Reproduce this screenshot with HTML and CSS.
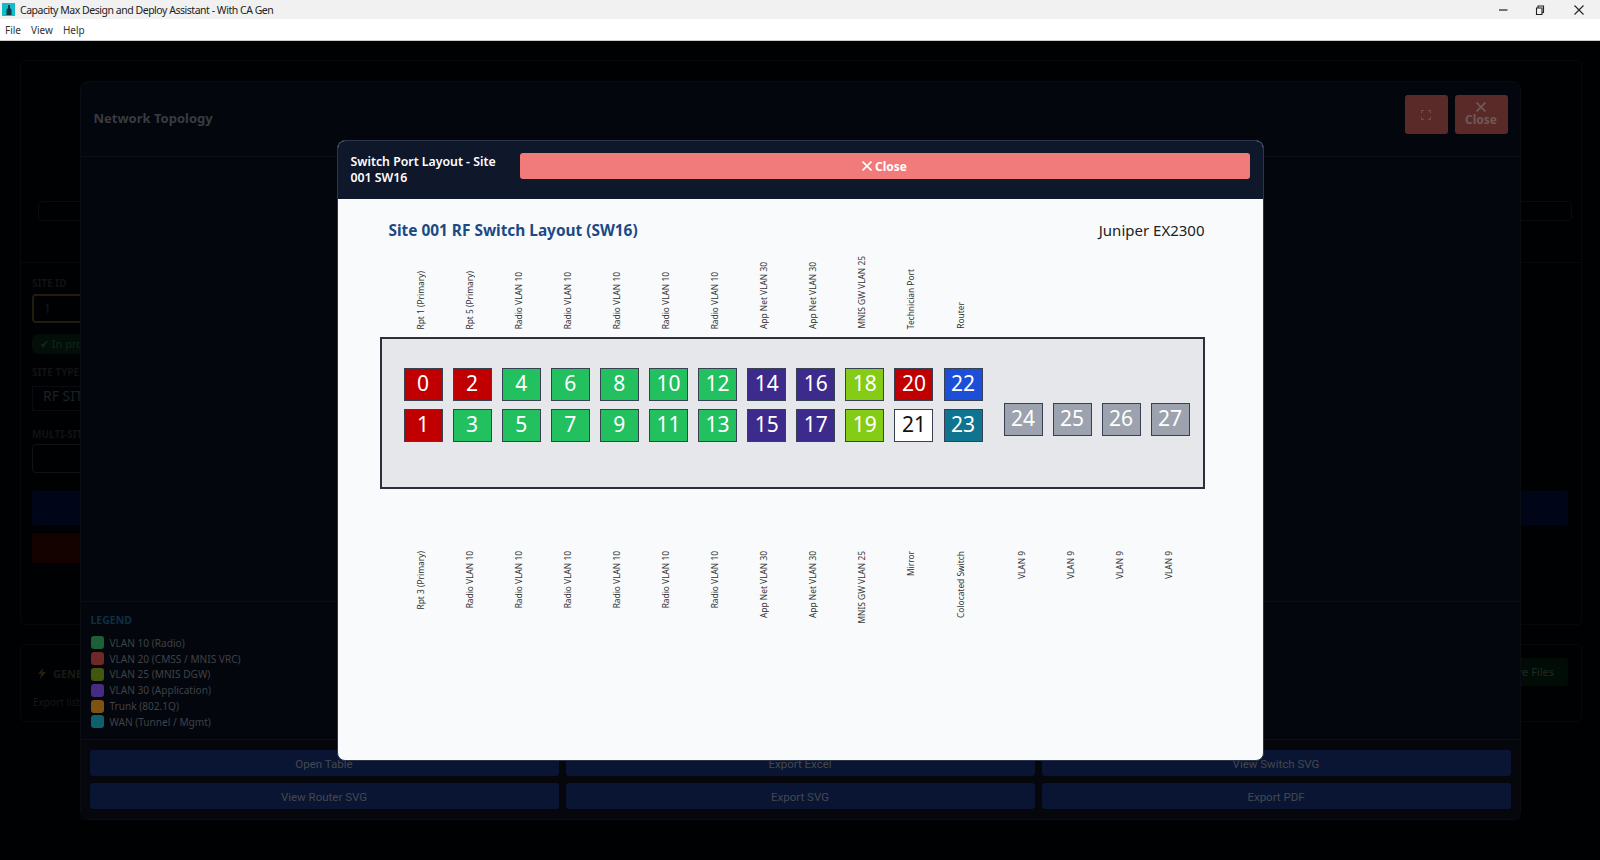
FILE: index.html
```html
<!DOCTYPE html>
<html lang="en">
<head>
    <meta charset="UTF-8">
    <meta name="viewport" content="width=device-width, initial-scale=1.0">
    <link rel="stylesheet" href="styles.css">
    <title>Capacity Max Design and Deploy Assistant - With CA Gen</title>
</head>
<body>
    <div class="titlebar">
        <svg class="app-icon" width="13" height="13" viewBox="0 0 13 13">
            <rect width="13" height="13" fill="#14bccb"/>
            <path d="M6 2h2v3l1.5 1.5V12h-5V6.500L6 5z" fill="#123a40"/>
        </svg>
        <span class="app-title">Capacity Max Design and Deploy Assistant - With CA Gen</span>
        <div class="win-buttons">
            <svg width="10" height="10" viewBox="0 0 10 10"><path d="M1 5h8.500" stroke="#222" stroke-width="1.200" fill="none"/></svg>
            <svg width="10" height="10" viewBox="0 0 10 10"><path d="M1.500 3h5.500v6.500h-5.500zM3 3V1h5.500v6.500H7" stroke="#222" stroke-width="1.100" fill="none"/></svg>
            <svg width="10" height="10" viewBox="0 0 10 10"><path d="M.5 .5l9 9M9.500 .5l-9 9" stroke="#222" stroke-width="1.100" fill="none"/></svg>
        </div>
    </div>
    <div class="menubar">
        <span>File</span>
        <span>View</span>
        <span>Help</span>
    </div>

    <div class="app">
        <div class="panel main-panel">
            <div class="strip"></div>
            <div class="form">
                <div class="form-label">SITE ID</div>
                <div class="input active">1</div>
                <div class="badge">✔ In pro</div>
                <div class="form-label type-label">SITE TYPE</div>
                <div class="select">RF SITE</div>
                <div class="form-label multi-label">MULTI-SITE</div>
                <div class="input multi-input"></div>
                <div class="bar blue-bar"></div>
                <div class="bar red-bar"></div>
            </div>
        </div>
        <div class="panel gen-panel">
            <div>
                <div class="gen-title">
                    <svg width="8" height="11" viewBox="0 0 8 11"><path d="M5 0L0 6h3l-1 5 6-7H4.500z" fill="#262008"/></svg>
                    GENE
                </div>
                <div class="gen-sub">Export list</div>
            </div>
            <div class="gen-button">Save Files</div>
        </div>

        <div class="overlay">
            <div class="topology">
                <div class="topology-header">
                    <div class="topology-title">Network Topology</div>
                    <div class="dim-button icon-button">
                        <svg width="10" height="10" viewBox="0 0 10 10"><path d="M.5 3V.5H3M7 .5h2.500V3M9.500 7v2.500H7M3 9.500H.5V7" stroke="#6b5452" fill="none"/></svg>
                    </div>
                    <div class="dim-button close-button">
                        <svg width="10" height="10" viewBox="0 0 10 10"><path d="M.5 .5l9 9M9.500 .5l-9 9" stroke="#6f5957" stroke-width="1.800" fill="none"/></svg>
                        Close
                    </div>
                </div>
                <div class="topology-body"></div>
                <div class="legend">
                    <div class="legend-title">LEGEND</div>
                    <div class="legend-item"><i class="sw-green"></i>VLAN 10 (Radio)</div>
                    <div class="legend-item"><i class="sw-red"></i>VLAN 20 (CMSS / MNIS VRC)</div>
                    <div class="legend-item"><i class="sw-olive"></i>VLAN 25 (MNIS DGW)</div>
                    <div class="legend-item"><i class="sw-purple"></i>VLAN 30 (Application)</div>
                    <div class="legend-item"><i class="sw-orange"></i>Trunk (802.1Q)</div>
                    <div class="legend-item"><i class="sw-teal"></i>WAN (Tunnel / Mgmt)</div>
                </div>
                <div class="topology-footer">
                    <button>Open Table</button>
                    <button>Export Excel</button>
                    <button>View Switch SVG</button>
                    <button>View Router SVG</button>
                    <button>Export SVG</button>
                    <button>Export PDF</button>
                </div>
            </div>
        </div>

        <div class="overlay">
            <div class="switch-modal">
                <div class="switch-header">
                    <div class="switch-title">Switch Port Layout - Site 001 SW16</div>
                    <button class="switch-close">
                        <svg width="10" height="10" viewBox="0 0 10 10"><path d="M.5 .5l9 9M9.500 .5l-9 9" stroke="#fff" stroke-width="1.600" fill="none"/></svg>
                        Close
                    </button>
                </div>
                <div class="switch-body">
                    <div class="switch-heading">
                        <h2>Site 001 RF Switch Layout (SW16)</h2>
                        <span>Juniper EX2300</span>
                    </div>

                    <div class="labels labels-top">
                        <div><span>Rpt 1 (Primary)</span></div>
                        <div><span>Rpt 5 (Primary)</span></div>
                        <div><span>Radio VLAN 10</span></div>
                        <div><span>Radio VLAN 10</span></div>
                        <div><span>Radio VLAN 10</span></div>
                        <div><span>Radio VLAN 10</span></div>
                        <div><span>Radio VLAN 10</span></div>
                        <div><span>App Net VLAN 30</span></div>
                        <div><span>App Net VLAN 30</span></div>
                        <div><span>MNIS GW VLAN 25</span></div>
                        <div><span>Technician Port</span></div>
                        <div><span>Router</span></div>
                    </div>

                    <div class="switch-panel">
                        <div class="port-bank">
                            <div class="port red">0</div>
                            <div class="port red">1</div>
                            <div class="port red">2</div>
                            <div class="port green">3</div>
                            <div class="port green">4</div>
                            <div class="port green">5</div>
                            <div class="port green">6</div>
                            <div class="port green">7</div>
                            <div class="port green">8</div>
                            <div class="port green">9</div>
                            <div class="port green">10</div>
                            <div class="port green">11</div>
                            <div class="port green">12</div>
                            <div class="port green">13</div>
                            <div class="port purple">14</div>
                            <div class="port purple">15</div>
                            <div class="port purple">16</div>
                            <div class="port purple">17</div>
                            <div class="port lime">18</div>
                            <div class="port lime">19</div>
                            <div class="port red">20</div>
                            <div class="port white">21</div>
                            <div class="port blue">22</div>
                            <div class="port teal">23</div>
                        </div>
                        <div class="port-bank uplinks">
                            <div class="port gray">24</div>
                            <div class="port gray">25</div>
                            <div class="port gray">26</div>
                            <div class="port gray">27</div>
                        </div>
                    </div>

                    <div class="labels labels-bottom">
                        <div><span>Rpt 3 (Primary)</span></div>
                        <div><span>Radio VLAN 10</span></div>
                        <div><span>Radio VLAN 10</span></div>
                        <div><span>Radio VLAN 10</span></div>
                        <div><span>Radio VLAN 10</span></div>
                        <div><span>Radio VLAN 10</span></div>
                        <div><span>Radio VLAN 10</span></div>
                        <div><span>App Net VLAN 30</span></div>
                        <div><span>App Net VLAN 30</span></div>
                        <div><span>MNIS GW VLAN 25</span></div>
                        <div><span>Mirror</span></div>
                        <div><span>Colocated Switch</span></div>
                        <div class="first-uplink"><span>VLAN 9</span></div>
                        <div class="uplink-label"><span>VLAN 9</span></div>
                        <div class="uplink-label"><span>VLAN 9</span></div>
                        <div class="uplink-label"><span>VLAN 9</span></div>
                    </div>
                </div>
            </div>
        </div>
    </div>
</body>
</html>
```

FILE: styles.css
```css
* {
    box-sizing: border-box;
}

body {
    font-family: 'Noto Sans', sans-serif;
    background-color: #000;
    height: 100vh;
    margin: 0;
    overflow: hidden;
    display: flex;
    flex-direction: column;
}

/* window chrome */
.titlebar {
    height: 19px;
    background-color: #f1f1f1;
    display: flex;
    align-items: center;
    padding-left: 2px;
    font-size: 10.500px;
    letter-spacing: -0.47px;
    color: #222;
}

.app-icon {
    margin-right: 5px;
}

.win-buttons {
    margin-left: auto;
    display: flex;
    gap: 29px;
    padding-right: 16px;
}

.win-buttons svg:first-child {
    margin-right: -2px;
}

.menubar {
    height: 22px;
    background-color: #fff;
    border-bottom: 1px solid #ccc;
    display: flex;
    align-items: center;
    gap: 10px;
    padding-left: 5px;
    font-size: 10px;
    color: #333;
}

.app {
    position: relative;
    flex: 1;
    padding: 19px 18px 0 20px;
    background-color: #000103;
}

/* dimmed page behind the dialogs */
.panel {
    border: 1px solid #07080b;
    border-radius: 4px;
}

.main-panel {
    height: 565px;
    padding-top: 140px;
}

.strip {
    height: 20px;
    margin: 0 9px 0 17px;
    border: 1px solid #0a0b0e;
    border-radius: 4px;
}

.form {
    margin-top: 41px;
    padding: 15px 13px 0 11px;
    border-top: 1px solid #07080b;
}

.form-label {
    height: 11px;
    line-height: 11px;
    font-size: 10px;
    font-weight: 700;
    color: #111215;
}

.input {
    width: 200px;
    height: 29px;
    margin-top: 5px;
    padding-left: 10px;
    border: 1px solid #101216;
    border-radius: 4px;
    font-size: 12px;
    line-height: 25px;
    color: #0a1c2c;
}

.input.active {
    border: 2px solid #221c10;
}

.badge {
    width: 200px;
    height: 20px;
    margin-top: 11px;
    padding-left: 8px;
    border-radius: 6px;
    background-color: #030e08;
    font-size: 11px;
    line-height: 20px;
    color: #0d2a17;
}

.type-label {
    margin-top: 13px;
}

.select {
    width: 200px;
    height: 25px;
    margin-top: 8px;
    padding-left: 10px;
    border: 1px solid #0a0b0e;
    font-size: 14px;
    line-height: 18px;
    color: #1e2024;
}

.multi-label {
    margin-top: 18px;
}

.multi-input {
    margin-top: 4px;
}

.bar {
    border-radius: 3px;
}

.blue-bar {
    height: 34px;
    margin-top: 18px;
    background-color: #010518;
}

.red-bar {
    width: 400px;
    height: 30px;
    margin-top: 8px;
    background-color: #130200;
}

.gen-panel {
    height: 78px;
    margin-top: 19px;
    padding: 13px 13px 0 12px;
    display: flex;
    justify-content: space-between;
    align-items: flex-start;
}

.gen-title {
    margin: 8px 0 0 5px;
    display: flex;
    align-items: center;
    gap: 7px;
    font-size: 11px;
    font-weight: 700;
    color: #1a1a14;
}

.gen-sub {
    margin-top: 14px;
    font-size: 10px;
    color: #14161a;
}

.gen-button {
    width: 200px;
    height: 28px;
    padding-right: 14px;
    background-color: #020c07;
    border-radius: 3px;
    text-align: right;
    font-size: 11px;
    line-height: 28px;
    color: #1d2a22;
}

/* dialogs */
.overlay {
    position: absolute;
    inset: 0;
    display: flex;
    align-items: center;
    justify-content: center;
}

.topology {
    width: 1441px;
    height: 739px;
    display: flex;
    flex-direction: column;
    background-color: #03060d;
    border: 1px solid #0a0c12;
    border-radius: 8px;
}

.topology-header {
    height: 75px;
    padding: 13px 12px 0 13px;
    display: flex;
    align-items: flex-start;
    gap: 7px;
    border-bottom: 1px solid #0c0e14;
}

.topology-title {
    margin-right: auto;
    margin-top: 14px;
    font-size: 13px;
    font-weight: 700;
    color: #393b40;
}

.dim-button {
    height: 39px;
    background-color: #592a28;
    border-radius: 3px;
    display: flex;
    flex-direction: column;
    align-items: center;
    justify-content: center;
}

.icon-button {
    width: 43px;
}

.close-button {
    width: 53px;
    gap: 1px;
    font-size: 12px;
    font-weight: 700;
    line-height: 14px;
    color: #6f5957;
}

.topology-body {
    flex: 1;
}

.legend {
    height: 138px;
    padding: 11px 10px 0;
    border-top: 1px solid #0c0e14;
}

.legend-title {
    height: 15px;
    margin-bottom: 7px;
    font-size: 10.500px;
    font-weight: 700;
    line-height: 15px;
    color: #0f3044;
}

.legend-item {
    height: 15.800px;
    display: flex;
    align-items: center;
    gap: 6px;
    font-size: 10.100px;
    color: #3f4247;
}

.legend-item i {
    width: 13px;
    height: 13px;
    border-radius: 3px;
}

.sw-green { background-color: #1c6037; }
.sw-red { background-color: #6e2828; }
.sw-olive { background-color: #435610; }
.sw-purple { background-color: #472b82; }
.sw-orange { background-color: #7e5210; }
.sw-teal { background-color: #0e616b; }

.topology-footer {
    height: 80px;
    padding: 10px 9px;
    display: grid;
    grid-template-columns: repeat(3, 469px);
    grid-auto-rows: 26px;
    gap: 7px;
    background-color: #05070c;
    border-top: 1px solid #0c0e14;
}

.topology-footer button {
    border: none;
    border-radius: 3px;
    padding-top: 2px;
    background-color: #0a1533;
    font-family: 'Roboto', sans-serif;
    font-size: 11.500px;
    color: #45484e;
}

/* switch port dialog */
.switch-modal {
    width: 927px;
    height: 621px;
    display: flex;
    flex-direction: column;
    border: 1px solid #2b3648;
    border-radius: 8px;
    overflow: hidden;
    background-color: #f8fafc;
}

.switch-header {
    height: 58px;
    flex-shrink: 0;
    padding: 0 13px;
    display: flex;
    align-items: flex-start;
    gap: 13px;
    background-color: #0f172a;
}

.switch-title {
    width: 156px;
    align-self: center;
    font-size: 12.300px;
    font-weight: 600;
    line-height: 16px;
    color: #fff;
}

.switch-close {
    flex: 1;
    height: 26px;
    margin-top: 12px;
    border: none;
    border-radius: 3px;
    display: flex;
    align-items: center;
    justify-content: center;
    gap: 3px;
    background-color: #f17a7a;
    font-family: 'Noto Sans', sans-serif;
    font-size: 12px;
    font-weight: 700;
    color: #fff;
}

.switch-body {
    flex: 1;
    padding: 21px 58px 0 42px;
}

.switch-heading {
    height: 20px;
    padding-left: 9px;
    display: flex;
    align-items: center;
    justify-content: space-between;
    margin-bottom: 10px;
}

.switch-heading h2 {
    margin: 0;
    font-size: 15.400px;
    font-weight: 700;
    color: #1a4a86;
}

.switch-heading span {
    font-size: 15px;
    color: #222;
}

.labels {
    display: flex;
    gap: 10.100px;
    padding-left: 24px;
    font-size: 8.400px;
    color: #333;
}

.labels div {
    width: 39px;
    padding-right: 6px;
    display: flex;
    justify-content: center;
}

.labels span {
    writing-mode: vertical-rl;
    transform: rotate(180deg);
    white-space: nowrap;
}

.labels-top {
    height: 79px;
    margin-bottom: 8px;
}

.labels-top div {
    align-items: flex-end;
}

.labels-bottom {
    margin-top: 62px;
}

.labels-bottom div {
    align-items: flex-start;
}

.labels-bottom .first-uplink {
    margin-left: 12px;
}

.labels-bottom .uplink-label {
    margin-left: -0.100px;
}

.switch-panel {
    height: 152px;
    padding: 29px 0 0 22px;
    display: flex;
    gap: 21px;
    background-color: #e5e7eb;
    border: 2px solid #2b303a;
}

.port-bank {
    display: grid;
    grid-template-rows: repeat(2, 33px);
    grid-auto-flow: column;
    grid-auto-columns: 39px;
    gap: 8px 10.100px;
}

.uplinks {
    grid-template-rows: 33px;
    column-gap: 10px;
    margin-top: 35px;
}

.port {
    display: flex;
    align-items: center;
    justify-content: center;
    padding-bottom: 3px;
    border: 1px solid #374151;
    font-size: 21px;
    color: #fff;
}

.red { background-color: #c00000; }
.green { background-color: #22c05f; }
.purple { background-color: #3c2a8c; }
.lime { background-color: #84cc16; }
.blue { background-color: #1d4ed8; }
.teal { background-color: #0e7490; }

.gray {
    padding-bottom: 4px;
    background-color: #9ca3af;
}

.white {
    background-color: #fff;
    color: #111;
}
```
